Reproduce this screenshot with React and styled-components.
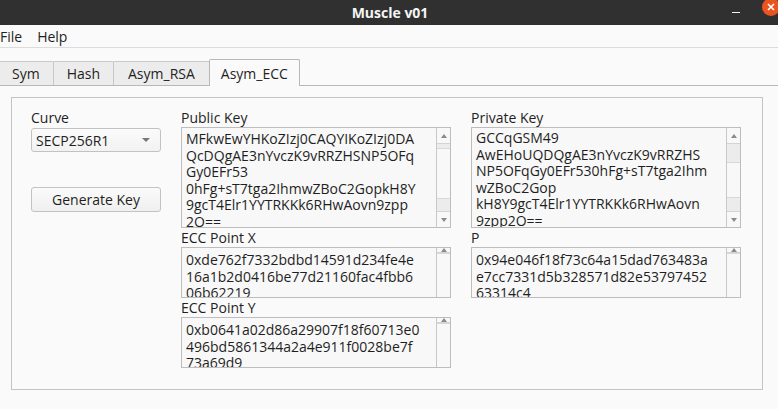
import React from 'react'
import styled, { createGlobalStyle } from 'styled-components'

const GlobalStyle = createGlobalStyle`
  html, body {
    margin: 0;
    padding: 0;
    background: #fafafa;
    font-family: 'Open Sans', 'Noto Sans', sans-serif;
    font-size: 14px;
    color: #1f1f1f;
  }
  body { width: 778px; height: 409px; overflow: hidden; }
`

const Window = styled.div`
  width: 778px;
  height: 409px;
  display: flex;
  flex-direction: column;
  background: #fafafa;
  overflow: hidden;
`

const TitleBar = styled.div`
  height: 25px;
  background: #303030;
  display: grid;
  grid-template-columns: 1fr auto 1fr;
  align-items: center;
`

const Title = styled.div`
  grid-column: 2;
  color: #f5f5f5;
  font-weight: 700;
  font-size: 14px;
  padding-left: 2px;
`

const Controls = styled.div`
  grid-column: 3;
  justify-self: end;
  display: flex;
  align-items: center;
  gap: 22px;
  margin-right: -2px;
  align-self: start;
`

const Minimize = styled.div`
  width: 8px;
  height: 1.5px;
  background: #f0f0f0;
  margin-top: 9px;
`

const Close = styled.div`
  width: 18px;
  height: 18px;
  border-radius: 50%;
  background: #e95420;
  margin-top: -2px;
  display: flex;
  align-items: center;
  justify-content: center;
`

const MenuBar = styled.div`
  height: 22px;
  display: flex;
  align-items: center;
  gap: 15px;
  border-bottom: 1px solid #dcdcdc;
`

const MenuItem = styled.span`
  font-size: 14px;
`

const TabStrip = styled.div`
  height: 38px;
  display: flex;
  align-items: flex-end;
  position: relative;
  &::after {
    content: '';
    position: absolute;
    left: 0;
    right: 0;
    bottom: 0;
    height: 1px;
    background: #b8b8b8;
    z-index: 0;
  }
`

const Tab = styled.div`
  position: relative;
  z-index: ${p => (p.$active ? 1 : 0)};
  height: ${p => (p.$active ? 27 : 25)}px;
  box-sizing: border-box;
  padding: 0 ${p => p.$pad}px;
  display: flex;
  align-items: center;
  background: ${p => (p.$active ? '#fafafa' : '#ececec')};
  border: 1px solid ${p => (p.$active ? '#b8b8b8' : '#c8c8c8')};
  border-bottom: ${p => (p.$active ? 'none' : '1px solid #b8b8b8')};
  border-left: ${p => (p.$first ? 'none' : undefined)};
  border-radius: 2px 2px 0 0;
  margin-left: -1px;
  font-size: 14px;
`

const Body = styled.div`
  flex: 1;
  padding: 11px 15px 19px 11px;
`

const Frame = styled.div`
  height: 293px;
  box-sizing: border-box;
  border: 1px solid #c4c4c4;
  background: #fafafa;
  display: grid;
  grid-template-columns: 130px 270px 270px;
  column-gap: 20px;
  padding: 10px 0 0 19px;
`

const Column = styled.div`
  display: flex;
  flex-direction: column;
`

const Label = styled.div`
  height: 19px;
  line-height: 19px;
  font-size: 14px;
`

const Combo = styled.div`
  height: 24px;
  box-sizing: border-box;
  border: 1px solid #c2c2c2;
  border-radius: 3px;
  background: linear-gradient(#fbfbfb, #f2f2f2);
  display: flex;
  align-items: center;
  justify-content: space-between;
  padding: 0 10px 0 4px;
  font-size: 14px;
  margin-top: 1px;
`

const Caret = styled.span`
  width: 0;
  height: 0;
  border-left: 4px solid transparent;
  border-right: 4px solid transparent;
  border-top: 4px solid #777;
`

const Button = styled.div`
  margin-top: 35px;
  height: 25px;
  box-sizing: border-box;
  border: 1px solid #c2c2c2;
  border-radius: 3px;
  background: linear-gradient(#fbfbfb, #efefef);
  display: flex;
  align-items: center;
  justify-content: center;
  font-size: 14px;
`

const TextBox = styled.div`
  height: ${p => p.$h}px;
  box-sizing: border-box;
  border: 1px solid #bdbdbd;
  background: #f8f8f8;
  display: flex;
  overflow: hidden;
`

const TextLines = styled.div`
  flex: 1;
  padding: 0 0 0 4px;
  margin-top: ${p => p.$offset}px;
  white-space: pre;
  line-height: 16.5px;
  font-size: 14px;
  overflow: hidden;
`

const ScrollBar = styled.div`
  width: 13px;
  border-left: 1px solid #c8c8c8;
  display: flex;
  flex-direction: column;
  background: #f8f8f8;
`

const Arrow = styled.div`
  height: 15px;
  display: flex;
  align-items: center;
  justify-content: center;
  border-${p => (p.$up ? 'bottom' : 'top')}: 1px solid #d4d4d4;
  &::before {
    content: '';
    border-left: 3.5px solid transparent;
    border-right: 3.5px solid transparent;
    ${p => (p.$up ? 'border-bottom' : 'border-top')}: 4px solid #8a8a8a;
  }
`

const Track = styled.div`
  flex: 1;
  background: #ececec;
  display: flex;
  flex-direction: column;
`

const Thumb = styled.div`
  margin-top: ${p => p.$top}px;
  height: ${p => p.$size}px;
  background: #f8f8f8;
  border-top: 1px solid #d8d8d8;
  border-bottom: 1px solid #d8d8d8;
`

const Area = ({ h, lines, offset = 4, thumb }) => (
  <TextBox $h={h}>
    <TextLines $offset={offset}>{lines.join('\n')}</TextLines>
    <ScrollBar>
      <Arrow $up />
      <Track>
        <Thumb $top={thumb ? thumb[0] : 0} $size={thumb ? thumb[1] : 20} />
      </Track>
      <Arrow />
    </ScrollBar>
  </TextBox>
)

const pubKey = [
  'MFkwEwYHKoZIzj0CAQYIKoZIzj0DA',
  'QcDQgAE3nYvczK9vRRZHSNP5OFq',
  'Gy0EFr53',
  '0hFg+sT7tga2IhmwZBoC2GopkH8Y',
  '9gcT4Elr1YYTRKKk6RHwAovn9zpp',
  '2O==',
]

const privKey = [
  'GCCqGSM49',
  'AwEHoUQDQgAE3nYvczK9vRRZHS',
  'NP5OFqGy0EFr530hFg+sT7tga2Ihm',
  'wZBoC2Gop',
  'kH8Y9gcT4Elr1YYTRKKk6RHwAovn',
  '9zpp2O==',
]

const pointX = ['0xde762f7332bdbd14591d234fe4e', '16a1b2d0416be77d21160fac4fbb6', '06b62219']
const pointY = ['0xb0641a02d86a29907f18f60713e0', '496bd5861344a2a4e911f0028be7f', '73a69d9']
const pointP = ['0x94e046f18f73c64a15dad763483a', 'e7cc7331d5b328571d82e53797452', '63314c4']

export default function App() {
  return (
    <Window>
      <GlobalStyle />
      <TitleBar>
        <Title>Muscle v01</Title>
        <Controls>
          <Minimize />
          <Close>
            <svg width="10" height="10" viewBox="0 0 10 10">
              <path d="M2 2 L8 8 M8 2 L2 8" stroke="#fff" strokeWidth="1.6" />
            </svg>
          </Close>
        </Controls>
      </TitleBar>
      <MenuBar>
        <MenuItem>File</MenuItem>
        <MenuItem>Help</MenuItem>
      </MenuBar>
      <TabStrip>
        <Tab $first $pad={13}>Sym</Tab>
        <Tab $pad={13}>Hash</Tab>
        <Tab $pad={14}>Asym_RSA</Tab>
        <Tab $active $pad={11}>Asym_ECC</Tab>
      </TabStrip>
      <Body>
        <Frame>
          <Column>
            <Label>Curve</Label>
            <Combo>
              SECP256R1
              <Caret />
            </Combo>
            <Button>Generate Key</Button>
          </Column>
          <Column>
            <Label>Public Key</Label>
            <Area h={101} lines={pubKey} offset={3} thumb={[4, 49]} />
            <Label>ECC Point X</Label>
            <Area h={51} lines={pointX} offset={4} thumb={[0, 100]} />
            <Label>ECC Point Y</Label>
            <Area h={51} lines={pointY} offset={4} thumb={[0, 100]} />
          </Column>
          <Column>
            <Label>Private Key</Label>
            <Area h={101} lines={privKey} offset={2} thumb={[18, 34]} />
            <Label>P</Label>
            <Area h={51} lines={pointP} offset={4} thumb={[0, 100]} />
          </Column>
        </Frame>
      </Body>
    </Window>
  )
}
